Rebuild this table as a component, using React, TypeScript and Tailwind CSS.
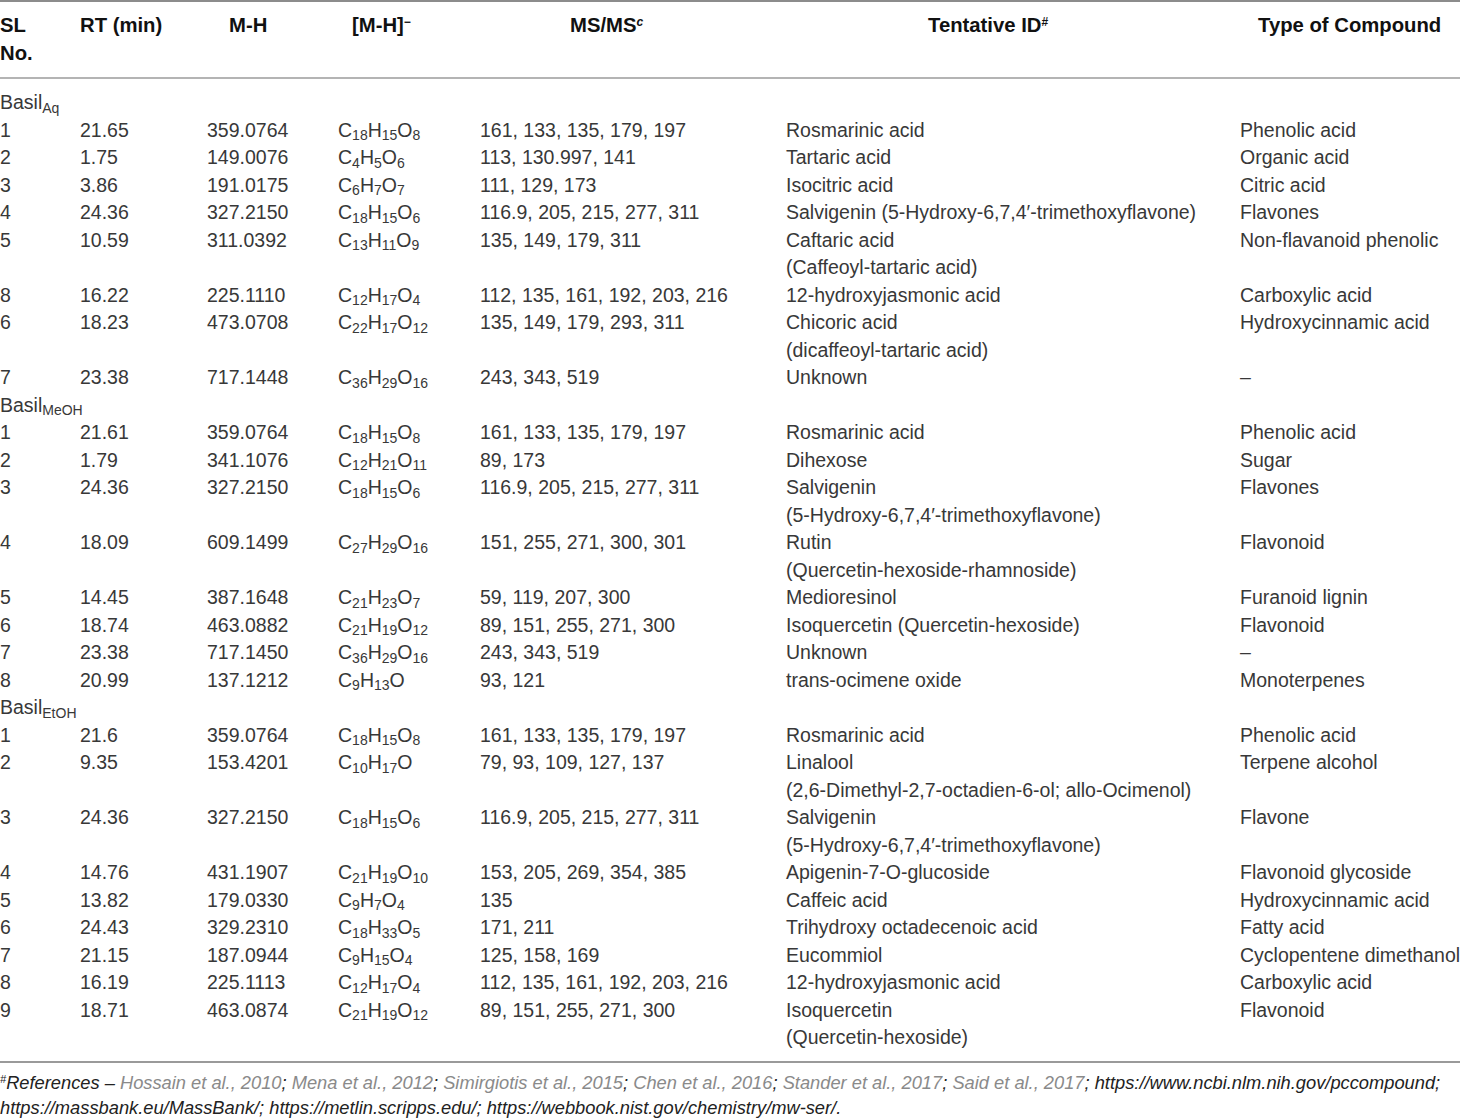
type Row = {
  sl: string;
  rt: string;
  mh: string;
  formula: string;
  msms: string;
  id: string[];
  type: string;
};

type Section = { sub: string; rows: Row[] };

const sections: Section[] = [
  {
    sub: "Aq",
    rows: [
      { sl: "1", rt: "21.65", mh: "359.0764", formula: "C18H15O8", msms: "161, 133, 135, 179, 197", id: ["Rosmarinic acid"], type: "Phenolic acid" },
      { sl: "2", rt: "1.75", mh: "149.0076", formula: "C4H5O6", msms: "113, 130.997, 141", id: ["Tartaric acid"], type: "Organic acid" },
      { sl: "3", rt: "3.86", mh: "191.0175", formula: "C6H7O7", msms: "111, 129, 173", id: ["Isocitric acid"], type: "Citric acid" },
      { sl: "4", rt: "24.36", mh: "327.2150", formula: "C18H15O6", msms: "116.9, 205, 215, 277, 311", id: ["Salvigenin (5-Hydroxy-6,7,4\u2032-trimethoxyflavone)"], type: "Flavones" },
      { sl: "5", rt: "10.59", mh: "311.0392", formula: "C13H11O9", msms: "135, 149, 179, 311", id: ["Caftaric acid", "(Caffeoyl-tartaric acid)"], type: "Non-flavanoid phenolic" },
      { sl: "8", rt: "16.22", mh: "225.1110", formula: "C12H17O4", msms: "112, 135, 161, 192, 203, 216", id: ["12-hydroxyjasmonic acid"], type: "Carboxylic acid" },
      { sl: "6", rt: "18.23", mh: "473.0708", formula: "C22H17O12", msms: "135, 149, 179, 293, 311", id: ["Chicoric acid", "(dicaffeoyl-tartaric acid)"], type: "Hydroxycinnamic acid" },
      { sl: "7", rt: "23.38", mh: "717.1448", formula: "C36H29O16", msms: "243, 343, 519", id: ["Unknown"], type: "\u2013" },
    ],
  },
  {
    sub: "MeOH",
    rows: [
      { sl: "1", rt: "21.61", mh: "359.0764", formula: "C18H15O8", msms: "161, 133, 135, 179, 197", id: ["Rosmarinic acid"], type: "Phenolic acid" },
      { sl: "2", rt: "1.79", mh: "341.1076", formula: "C12H21O11", msms: "89, 173", id: ["Dihexose"], type: "Sugar" },
      { sl: "3", rt: "24.36", mh: "327.2150", formula: "C18H15O6", msms: "116.9, 205, 215, 277, 311", id: ["Salvigenin", "(5-Hydroxy-6,7,4\u2032-trimethoxyflavone)"], type: "Flavones" },
      { sl: "4", rt: "18.09", mh: "609.1499", formula: "C27H29O16", msms: "151, 255, 271, 300, 301", id: ["Rutin", "(Quercetin-hexoside-rhamnoside)"], type: "Flavonoid" },
      { sl: "5", rt: "14.45", mh: "387.1648", formula: "C21H23O7", msms: "59, 119, 207, 300", id: ["Medioresinol"], type: "Furanoid lignin" },
      { sl: "6", rt: "18.74", mh: "463.0882", formula: "C21H19O12", msms: "89, 151, 255, 271, 300", id: ["Isoquercetin (Quercetin-hexoside)"], type: "Flavonoid" },
      { sl: "7", rt: "23.38", mh: "717.1450", formula: "C36H29O16", msms: "243, 343, 519", id: ["Unknown"], type: "\u2013" },
      { sl: "8", rt: "20.99", mh: "137.1212", formula: "C9H13O", msms: "93, 121", id: ["trans-ocimene oxide"], type: "Monoterpenes" },
    ],
  },
  {
    sub: "EtOH",
    rows: [
      { sl: "1", rt: "21.6", mh: "359.0764", formula: "C18H15O8", msms: "161, 133, 135, 179, 197", id: ["Rosmarinic acid"], type: "Phenolic acid" },
      { sl: "2", rt: "9.35", mh: "153.4201", formula: "C10H17O", msms: "79, 93, 109, 127, 137", id: ["Linalool", "(2,6-Dimethyl-2,7-octadien-6-ol; allo-Ocimenol)"], type: "Terpene alcohol" },
      { sl: "3", rt: "24.36", mh: "327.2150", formula: "C18H15O6", msms: "116.9, 205, 215, 277, 311", id: ["Salvigenin", "(5-Hydroxy-6,7,4\u2032-trimethoxyflavone)"], type: "Flavone" },
      { sl: "4", rt: "14.76", mh: "431.1907", formula: "C21H19O10", msms: "153, 205, 269, 354, 385", id: ["Apigenin-7-O-glucoside"], type: "Flavonoid glycoside" },
      { sl: "5", rt: "13.82", mh: "179.0330", formula: "C9H7O4", msms: "135", id: ["Caffeic acid"], type: "Hydroxycinnamic acid" },
      { sl: "6", rt: "24.43", mh: "329.2310", formula: "C18H33O5", msms: "171, 211", id: ["Trihydroxy octadecenoic acid"], type: "Fatty acid" },
      { sl: "7", rt: "21.15", mh: "187.0944", formula: "C9H15O4", msms: "125, 158, 169", id: ["Eucommiol"], type: "Cyclopentene dimethanol" },
      { sl: "8", rt: "16.19", mh: "225.1113", formula: "C12H17O4", msms: "112, 135, 161, 192, 203, 216", id: ["12-hydroxyjasmonic acid"], type: "Carboxylic acid" },
      { sl: "9", rt: "18.71", mh: "463.0874", formula: "C21H19O12", msms: "89, 151, 255, 271, 300", id: ["Isoquercetin", "(Quercetin-hexoside)"], type: "Flavonoid" },
    ],
  },
];

const cols = "grid grid-cols-[80px_127px_131px_142px_306px_454px_220px]";

// digits in a formula are subscripts
const Formula = ({ f }: { f: string }) => (
  <>
    {f.split(/(\d+)/).map((part, i) =>
      /^\d+$/.test(part) ? (
        <sub key={i} className="text-[14px]">
          {part}
        </sub>
      ) : (
        <span key={i}>{part}</span>
      )
    )}
  </>
);

const Cite = ({ children }: { children: React.ReactNode }) => (
  <span className="text-[#8a8a8a]">{children}</span>
);

export default function App() {
  return (
    <div className="w-[1460px] overflow-hidden bg-white font-['Liberation_Sans',Arial,sans-serif] text-[#383838]">
      <div className="border-t-2 border-[#8c8c8c]">
        <div
          className={`${cols} border-b-2 border-[#b4b4b4] pt-[10px] pb-[10px] text-[20.3px] leading-[27.5px] font-bold text-[#111]`}
        >
          <div>
            SL
            <br />
            No.
          </div>
          <div>RT (min)</div>
          <div className="pl-[22px]">M-H</div>
          <div className="pl-[14px]">
            [M-H]<sup className="text-[12px]">&minus;</sup>
          </div>
          <div className="pl-[90px]">
            MS/MS<sup className="text-[12px] italic">c</sup>
          </div>
          <div className="pl-[142px]">
            Tentative ID<sup className="text-[12px]">#</sup>
          </div>
          <div className="pl-[18px] whitespace-nowrap">Type of Compound</div>
        </div>

        <div className={`${cols} pt-[10px] pb-[9px] text-[19.5px] leading-[27.5px]`}>
          {sections.map((s) => (
            <Sectionrows key={s.sub} s={s} />
          ))}
        </div>
      </div>

      <div className="border-t-2 border-[#9a9a9a] pt-[7px] text-[18.3px] leading-[25px] italic text-[#222] whitespace-nowrap">
        <div>
          <sup className="text-[11px]">#</sup>References &ndash; <Cite>Hossain et al., 2010</Cite>; <Cite>Mena et al., 2012</Cite>;{" "}
          <Cite>Simirgiotis et al., 2015</Cite>; <Cite>Chen et al., 2016</Cite>; <Cite>Stander et al., 2017</Cite>;{" "}
          <Cite>Said et al., 2017</Cite>; https://www.ncbi.nlm.nih.gov/pccompound;
        </div>
        <div>https://massbank.eu/MassBank/; https://metlin.scripps.edu/; https://webbook.nist.gov/chemistry/mw-ser/.</div>
      </div>
    </div>
  );
}

function Sectionrows({ s }: { s: Section }) {
  return (
    <>
      <div className="col-span-7">
        Basil<sub className="text-[14px]">{s.sub}</sub>
      </div>
      {s.rows.map((r, i) => (
        <div key={i} className="contents">
          <div>{r.sl}</div>
          <div>{r.rt}</div>
          <div>{r.mh}</div>
          <div className="whitespace-nowrap">
            <Formula f={r.formula} />
          </div>
          <div>{r.msms}</div>
          <div>
            {r.id.map((line) => (
              <div key={line} className="whitespace-nowrap">
                {line}
              </div>
            ))}
          </div>
          <div className="whitespace-nowrap">{r.type}</div>
        </div>
      ))}
    </>
  );
}
